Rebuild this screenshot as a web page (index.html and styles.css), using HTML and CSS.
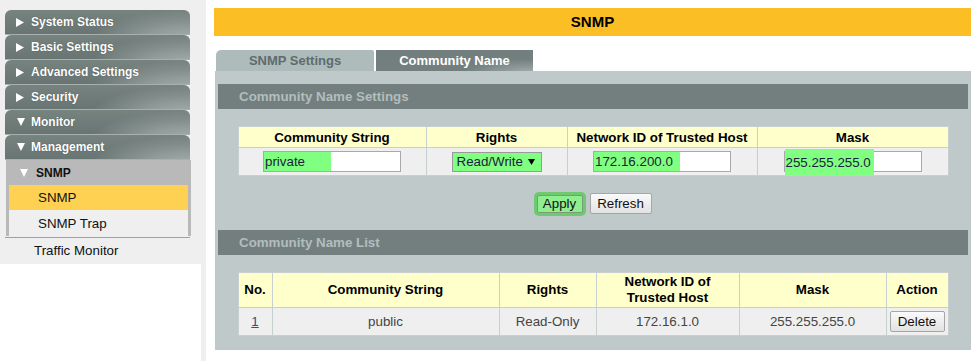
FILE: index.html
```html
<!DOCTYPE html>
<html>
<head>
<meta charset="utf-8">
<title>SNMP</title>
<link rel="stylesheet" href="styles.css">
</head>
<body>
<div class="page">
  <aside class="sidebar">
    <nav class="menu">
      <div class="nav-item"><svg class="tri-r" width="8" height="9" viewBox="0 0 8 9"><polygon points="0,0 8,4.5 0,9" fill="#fff"/></svg><span>System Status</span></div>
      <div class="nav-item"><svg class="tri-r" width="8" height="9" viewBox="0 0 8 9"><polygon points="0,0 8,4.5 0,9" fill="#fff"/></svg><span>Basic Settings</span></div>
      <div class="nav-item"><svg class="tri-r" width="8" height="9" viewBox="0 0 8 9"><polygon points="0,0 8,4.5 0,9" fill="#fff"/></svg><span>Advanced Settings</span></div>
      <div class="nav-item"><svg class="tri-r" width="8" height="9" viewBox="0 0 8 9"><polygon points="0,0 8,4.5 0,9" fill="#fff"/></svg><span>Security</span></div>
      <div class="nav-item"><svg class="tri-d" width="8" height="8" viewBox="0 0 8 8"><polygon points="0,0 8,0 4,8" fill="#fff"/></svg><span>Monitor</span></div>
      <div class="nav-item"><svg class="tri-d" width="8" height="8" viewBox="0 0 8 8"><polygon points="0,0 8,0 4,8" fill="#fff"/></svg><span>Management</span></div>
      <div class="sub">
        <div class="sub-head"><svg class="tri-s" width="8" height="8" viewBox="0 0 8 8"><polygon points="0,0 8,0 4,8" fill="#fff"/></svg><span>SNMP</span></div>
        <div class="sub-list">
          <div class="sub-link active">SNMP</div>
          <div class="sub-link last">SNMP Trap</div>
        </div>
        <div class="sub-tail"></div>
      </div>
      <div class="menu-rule"></div>
      <div class="plain-link">Traffic Monitor</div>
    </nav>
    <div class="sidebar-fill"></div>
  </aside>

  <main class="content">
    <div class="title-bar">SNMP</div>
    <div class="tabs">
      <div class="tab">SNMP Settings</div>
      <div class="tab current">Community Name</div>
    </div>
    <section class="panel">
      <div class="section-head">Community Name Settings</div>
      <table class="grid form-grid">
        <colgroup><col class="c1"><col class="c2"><col class="c3"><col class="c4"></colgroup>
        <tr class="head-row">
          <th>Community String</th>
          <th>Rights</th>
          <th>Network ID of Trusted Host</th>
          <th>Mask</th>
        </tr>
        <tr class="data-row">
          <td><div class="field"><span class="hl hl-private">private</span></div></td>
          <td><div class="select"><span>Read/Write</span><svg width="7" height="6" viewBox="0 0 7 6"><polygon points="0,0 7,0 3.5,6" fill="#000"/></svg></div></td>
          <td><div class="field"><span class="hl hl-net">172.16.200.0</span></div></td>
          <td><div class="field"><span class="hl hl-mask">255.255.255.0</span></div></td>
        </tr>
      </table>
      <div class="actions">
        <button class="btn btn-apply">Apply</button>
        <button class="btn btn-refresh">Refresh</button>
      </div>
      <div class="section-head">Community Name List</div>
      <table class="grid list-grid">
        <colgroup><col class="l1"><col class="l2"><col class="l3"><col class="l4"><col class="l5"><col class="l6"></colgroup>
        <tr class="head-row2">
          <th>No.</th>
          <th>Community String</th>
          <th>Rights</th>
          <th>Network ID of<br>Trusted Host</th>
          <th>Mask</th>
          <th>Action</th>
        </tr>
        <tr class="data-row2">
          <td><a class="num" href="#">1</a></td>
          <td>public</td>
          <td>Read-Only</td>
          <td>172.16.1.0</td>
          <td>255.255.255.0</td>
          <td><button class="btn btn-delete">Delete</button></td>
        </tr>
      </table>
    </section>
  </main>
</div>
</body>
</html>
```

FILE: styles.css
```css
html, body {
  margin: 0;
  padding: 0;
  height: 100%;
  overflow: hidden;
}
body {
  font-family: "Liberation Sans", Arial, sans-serif;
  background: #fff;
  color: #000;
}
.page {
  display: flex;
  height: 361px;
}

/* ---------- sidebar ---------- */
.sidebar {
  width: 206px;
  flex: none;
  display: flex;
  flex-direction: column;
  background: #efefef;
}
.menu {
  height: 264px;
  box-sizing: border-box;
  padding: 10px 16px 0 5px;
}
.nav-item {
  height: 24px;
  border-bottom: 1px solid #a7b0af;
  border-radius: 6px 6px 0 0;
  display: flex;
  align-items: center;
  padding-left: 11px;
  color: #fff;
  font-size: 12px;
  font-weight: bold;
  text-shadow: 0 0 1px rgba(40, 50, 50, 0.7);
  background:
    radial-gradient(100px 30px at 100% 125%, #a6b0af 0%, #8f9a99 45%, rgba(112, 124, 123, 0) 100%),
    linear-gradient(#77837f, #697573);
}
.nav-item svg {
  flex: none;
  margin-right: 7px;
}
.nav-item .tri-d {
  margin-left: 1px;
  margin-right: 6px;
}
.sub {
  margin-left: 1px;
  width: 185px;
}
.sub-head {
  height: 25px;
  background: #b9b9b9;
  display: flex;
  align-items: center;
  padding-left: 14px;
  font-size: 12px;
  font-weight: bold;
  color: #111;
}
.sub-head svg {
  margin-right: 8px;
}
.sub-list {
  background: #b9b9b9;
  padding: 0 3px 0 3px;
}
.sub-link {
  height: 25px;
  line-height: 25px;
  padding-left: 29px;
  font-size: 13.33px;
  color: #111;
  background: #efefef;
}
.sub-link.last {
  height: 26px;
  line-height: 27px;
}
.sub-link.active {
  background: #ffd152;
}
.sub-tail {
  height: 1px;
  margin-left: 3px;
  background: #efefef;
}
.menu-rule {
  height: 1px;
  background: #a0a0a0;
}
.plain-link {
  height: 25px;
  line-height: 25px;
  padding-left: 29px;
  font-size: 13.33px;
  color: #111;
}
.sidebar-fill {
  flex: 1;
  background: #fff;
  margin-right: 5px;
}

/* ---------- content ---------- */
.content {
  flex: 1;
  min-width: 0;
  padding: 8px 0 0 8px;
  background: #fff;
}
.title-bar {
  height: 28px;
  line-height: 28px;
  background: #fbbf25;
  text-align: center;
  font-size: 15px;
  font-weight: bold;
  color: #000;
}
.tabs {
  display: flex;
  gap: 2px;
  margin-top: 14px;
  padding-left: 2px;
  height: 21px;
}
.tab {
  width: 158px;
  height: 21px;
  line-height: 21px;
  text-align: center;
  font-size: 13px;
  font-weight: bold;
  color: #5d6c6d;
  background: #adbbbb;
  border-radius: 5px 2px 0 0;
}
.tab.current {
  width: 157px;
  color: #fff;
  border-radius: 0;
  background:
    radial-gradient(70px 14px at 100% 110%, #a7b1b1 0%, #8d9898 45%, rgba(115, 127, 127, 0) 100%),
    #737f7f;
}
.panel {
  margin-left: 1px;
  background: #c0c9ca;
  padding: 13px 3px 14px;
}
.section-head {
  height: 25px;
  line-height: 25px;
  background: #737f7f;
  color: #b2bdbd;
  font-size: 13.33px;
  font-weight: bold;
  padding-left: 21px;
}

/* ---------- tables ---------- */
.grid {
  border-collapse: collapse;
  table-layout: fixed;
  width: 710px;
  margin: 17px auto 0;
  font-size: 13.33px;
}
.grid th,
.grid td {
  border: 1px solid #c8cfcf;
  padding: 0;
  text-align: center;
}
.grid th {
  background: #ffffcc;
  font-weight: bold;
  color: #000;
}
.grid td {
  background: #efefef;
  color: #444;
}
.c1 { width: 188px; }
.c2 { width: 141px; }
.c3 { width: 190px; }
.c4 { width: 191px; }
.head-row th { height: 20px; }
.data-row td { height: 27px; }

.l1 { width: 34px; }
.l2 { width: 227px; }
.l3 { width: 97px; }
.l4 { width: 143px; }
.l5 { width: 147px; }
.l6 { width: 62px; }
.head-row2 th { height: 34px; line-height: 16px; }
.data-row2 td { height: 27px; }

.field {
  display: flex;
  width: 138px;
  height: 21px;
  box-sizing: border-box;
  margin: 0 auto;
  border: 1px solid #a9a9a9;
  background: #fff;
  text-align: left;
}
.hl {
  display: flex;
  align-items: center;
  background: #80ff80;
  color: #1c1c40;
  padding-left: 1px;
  box-sizing: border-box;
}
.hl-private { width: 67px; }
.hl-net { width: 86px; }
.hl-mask {
  width: 89px;
  margin: -3px 0 -4px;
}
.select {
  display: flex;
  align-items: center;
  justify-content: space-between;
  width: 90px;
  height: 20px;
  box-sizing: border-box;
  margin: 0 auto;
  padding: 0 6px 0 4px;
  border: 1px solid #9a9a9a;
  background: #80ff80;
  color: #1c1c40;
}
.num {
  color: #2a4ba0;
  text-decoration: underline;
}

/* ---------- buttons ---------- */
.actions {
  display: flex;
  justify-content: center;
  align-items: center;
  gap: 7px;
  height: 21px;
  margin: 17px 0 16px;
}
.btn {
  font-family: "Liberation Sans", Arial, sans-serif;
  font-size: 13.33px;
  color: #111;
  padding: 0;
  box-sizing: border-box;
  border: 1px solid #a6a6a6;
  border-radius: 2px;
  background: linear-gradient(#fafafa, #e2e2e2);
}
.btn-apply {
  width: 46px;
  height: 18px;
  background: #8fee8f;
  border-color: #7a9a7a;
  box-shadow: 0 0 0 3px #70c970;
  margin-left: 2px;
}
.btn-refresh {
  width: 62px;
  height: 21px;
}
.btn-delete {
  width: 55px;
  height: 21px;
  display: block;
  margin: 0 auto;
}
```
